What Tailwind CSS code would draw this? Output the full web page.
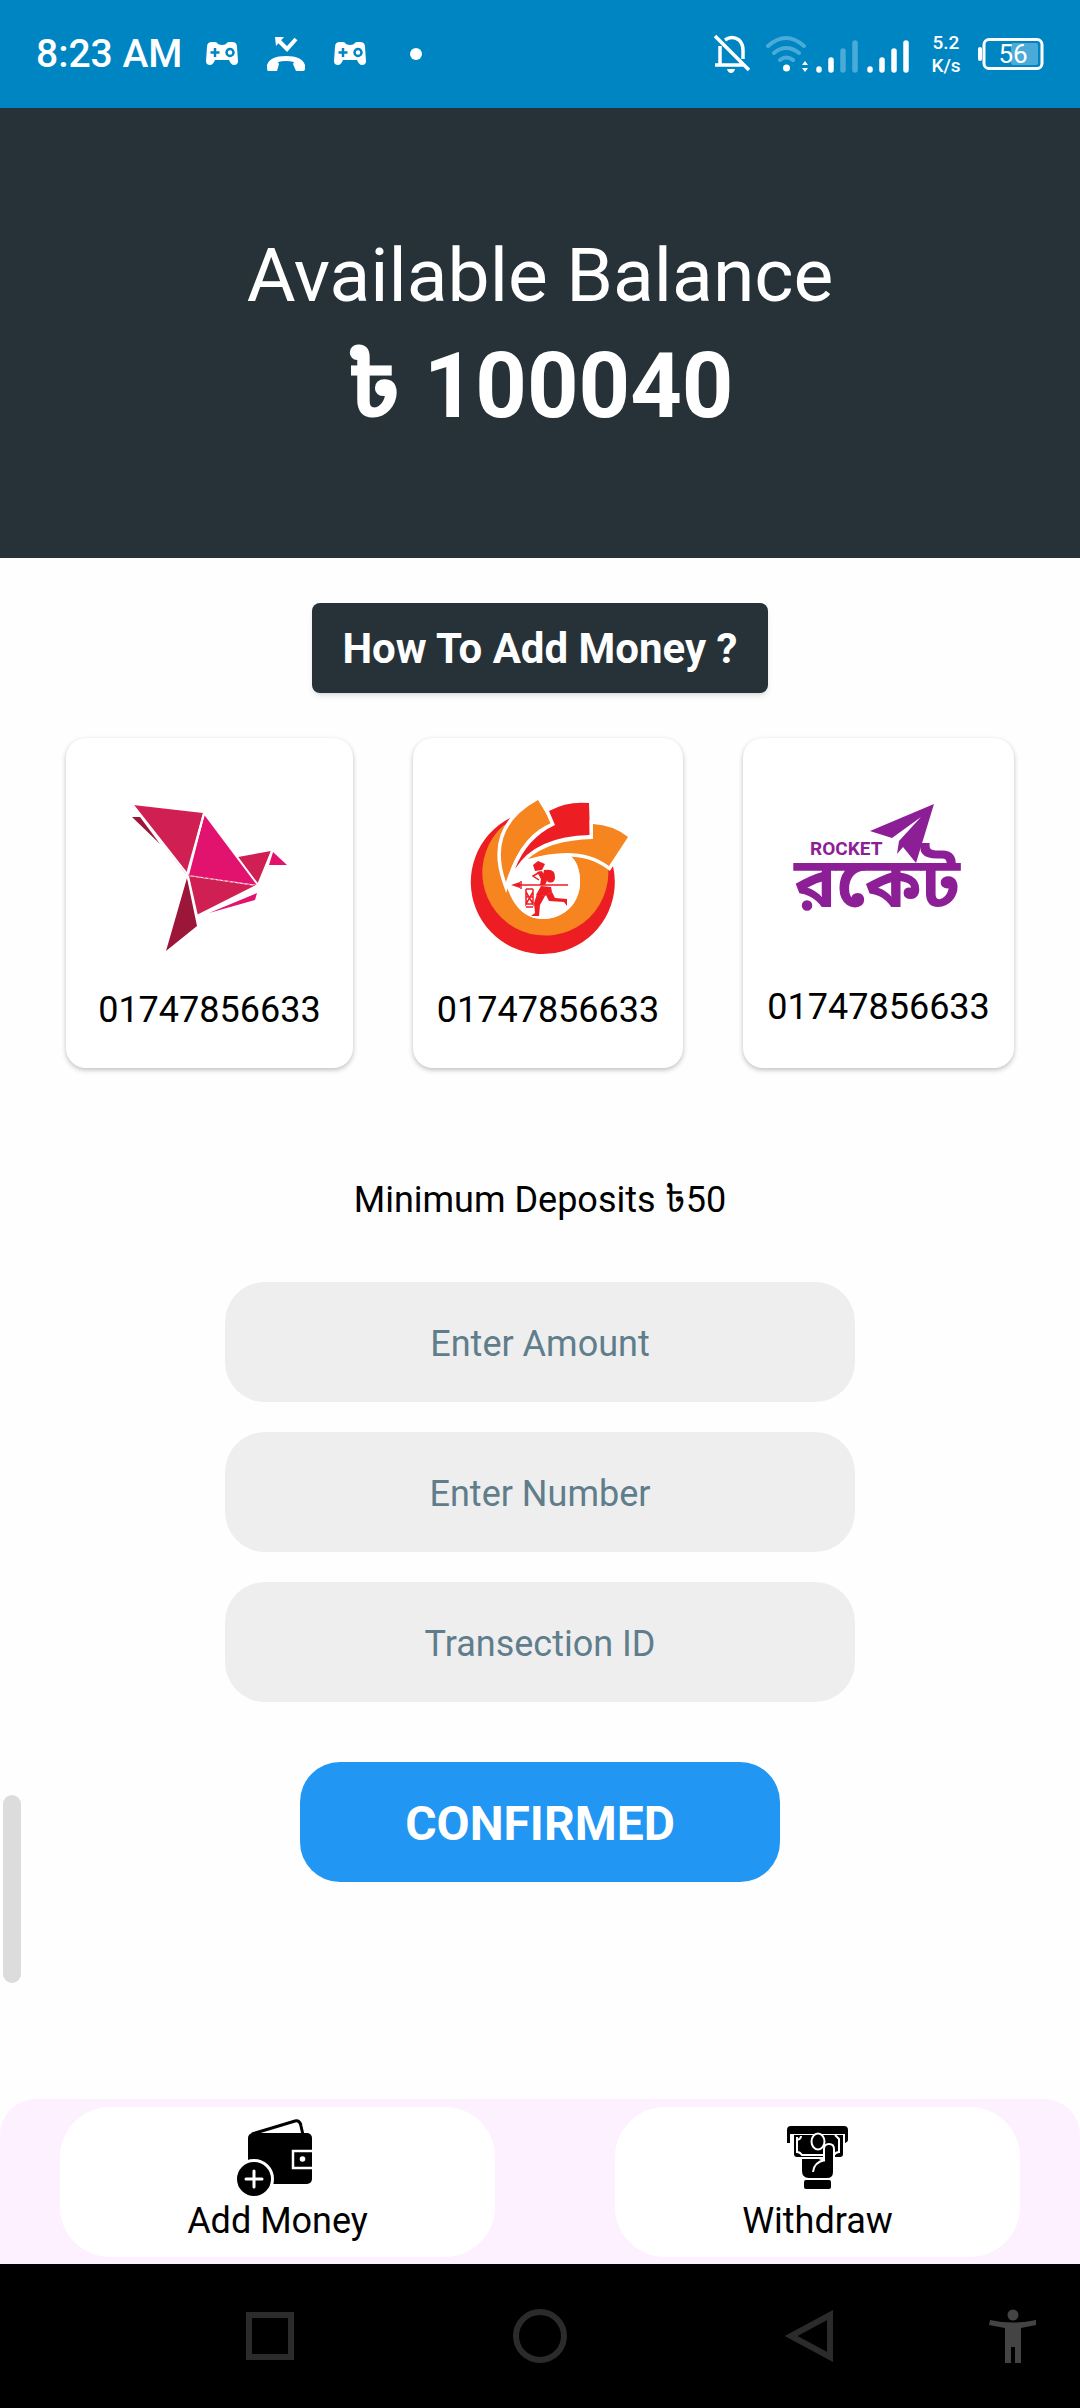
<!DOCTYPE html>
<html lang="en">
<head>
    <meta charset="UTF-8">
    <meta name="viewport" content="width=device-width, initial-scale=1.0">
    <title>Add Money</title>
    <script src="https://cdn.jsdelivr.net/npm/@tailwindcss/browser@4"></script>
    <style>
        body { font-family: Roboto, 'Noto Sans', 'Noto Sans Bengali', sans-serif; }
    </style>
</head>
<body class="bg-[#fefefe] text-black min-h-screen flex flex-col relative">
    <!-- Status bar -->
    <div class="bg-[#0085c3] h-[108px] px-9 flex items-center justify-between text-white">
        <div class="flex items-center">
            <span class="text-[39px] font-medium">8:23 AM</span>
            <svg class="w-8 h-8 ml-6" viewBox="0 0 32 32" aria-hidden="true">
                <path fill="#fff" d="M6 4h3q2 0 3 2 4 2 8 0 1-2 3-2h3q5 0 5 5l1 14q0 4-4 4-3 0-5-5H9q-2 5-5 5-4 0-4-4L1 9q0-5 5-5z"/>
                <path stroke="#0085c3" stroke-width="2.5" d="M9 10v9M4.500 14.500h9" fill="none"/>
                <circle cx="24" cy="14.500" r="3.500" fill="none" stroke="#0085c3" stroke-width="2.500"/>
            </svg>
            <svg class="w-10 h-10 ml-7" viewBox="0 0 40 40" aria-hidden="true">
                <path d="M13 7l8 8L30 5" fill="none" stroke="#fff" stroke-width="4"/>
                <path fill="#fff" d="M9 3h9l-8 9z"/>
                <path fill="#fff" d="M1 31Q4 22 20 22t19 9v4q0 2-2 2h-7l-3-7 1-2q-8-2-16 0l1 2-2 7H2q-1 0-1-6z"/>
            </svg>
            <svg class="w-8 h-8 ml-7" viewBox="0 0 32 32" aria-hidden="true">
                <path fill="#fff" d="M6 4h3q2 0 3 2 4 2 8 0 1-2 3-2h3q5 0 5 5l1 14q0 4-4 4-3 0-5-5H9q-2 5-5 5-4 0-4-4L1 9q0-5 5-5z"/>
                <path stroke="#0085c3" stroke-width="2.500" d="M9 10v9M4.500 14.500h9" fill="none"/>
                <circle cx="24" cy="14.500" r="3.500" fill="none" stroke="#0085c3" stroke-width="2.500"/>
            </svg>
            <span class="w-3 h-3 ml-11 rounded-full bg-white"></span>
        </div>
        <div class="flex items-center">
            <svg class="w-9 h-10" viewBox="0 0 36 40" fill="none" stroke="#fff" stroke-width="3.500" aria-hidden="true">
                <path d="M1 2l34 34M1 31h28M6 30V12M11 6Q18 1 25 6q4 4 4 10v9"/>
                <path d="M13 35h8q-1 4-4 4t-4-4z" fill="#fff" stroke="none"/>
            </svg>
            <svg class="w-11 h-10 ml-4" viewBox="0 0 44 40" fill="none" stroke-linecap="round" aria-hidden="true">
                <g stroke="#4aabd8" stroke-width="4"><path d="M2 12Q20-4 38 12M8 19q12-10 25 0M14 26q6-5 13 0"/></g>
                <circle cx="20.500" cy="34" r="3.500" fill="#fff"/>
                <path fill="#fff" d="M36 31l3-4 3 4zM36 34l3 4 3-4z"/>
            </svg>
            <svg class="w-11 h-10 ml-1" viewBox="0 0 44 40" stroke-width="5.500" stroke-linecap="round" aria-hidden="true">
                <path stroke="#fff" d="M5 35v1M17 26v10"/>
                <path stroke="#4aabd8" d="M29 17v19M41 9v27"/>
            </svg>
            <svg class="w-11 h-10 ml-2" viewBox="0 0 44 40" stroke="#fff" stroke-width="5.500" stroke-linecap="round" aria-hidden="true">
                <path d="M4 35v1M16 26v10M28 17v19M40 9v27"/>
            </svg>
            <div class="w-8 ml-5 flex flex-col text-center text-[19px] leading-[23px] font-medium whitespace-nowrap">
                <span>5.2</span>
                <span>K/s</span>
            </div>
            <svg class="w-[66px] h-8 ml-4" viewBox="0 0 66 32" font-family="Roboto" aria-label="Battery 56 percent">
                <rect x="0" y="9" width="4" height="14" rx="2" fill="#fff"/>
                <rect x="6" y="1.500" width="58" height="29" rx="5" fill="none" stroke="#fff" stroke-width="3"/>
                <rect x="33" y="5" width="27" height="22" rx="2" fill="#4aabd8"/>
                <text x="35" y="25" text-anchor="middle" font-size="26" fill="#fff">56</text>
            </svg>
        </div>
    </div>

    <!-- Balance -->
    <header class="bg-[#263238] h-[450px] pt-5 flex flex-col items-center justify-center text-white">
        <p class="text-[75px] leading-[88px]">Available Balance</p>
        <h1 class="text-[90px] leading-[136px] font-bold">৳ 100040</h1>
    </header>

    <main class="flex-1 flex flex-col items-center">
        <button type="button" class="mt-[45px] h-[90px] px-[30px] rounded-lg bg-[#263238] text-white text-[42px] font-bold shadow-md">How To Add Money ?</button>

        <!-- Payment methods -->
        <div class="mt-[45px] flex justify-center gap-[60px] text-4xl">
            <section class="pt-8 pb-7 px-8 flex flex-col items-center justify-center bg-white rounded-[20px] shadow-[0_2px_5px_rgba(0,0,0,0.25)]">
                <svg class="w-[210px] h-[210px]" viewBox="0 2 210 210" aria-label="bKash">
                    <path fill="#9b1638" d="M28 49h8l20 27zM83 110l10 48-31 25z"/>
                    <path fill="#d02053" d="M29 37l70 8-17 61zM84 108l68 10-59 30zM134 89l33-6-13 34z"/>
                    <path fill="#e2136e" d="M101 46l53 71-70-10zM169 84l14 13h-18zM105 145l48-20-2 7z"/>
                    <path fill="none" stroke="#fff" stroke-width="2" d="M29 37l55 70 16-62M84 108l9 40 61-31L100 45M168 83l-14 34"/>
                    <path fill="none" stroke="#e0557b" stroke-dasharray="3 2" d="M84 107l69 11"/>
                </svg>
                <span class="leading-[60px]">01747856633</span>
            </section>
            <section class="pt-8 pb-7 px-6 flex flex-col items-center justify-center bg-white rounded-[20px] shadow-[0_2px_5px_rgba(0,0,0,0.25)]">
                <svg class="w-[210px] h-[210px]" viewBox="0 2 210 210" aria-label="Nagad">
                    <!-- ring -->
                    <path fill="#ed1d24" d="M67 50A72 72 0 1 0 170 98L130 90 80 70z"/>
                    <path fill="#f6841f" d="M61 57A63 63 0 1 0 165 98L130 80 80 70z"/>
                    <path fill="#fff" d="M126 87C134 92 137 103 137 114 137 136 120 151 100 151 80 151 68 136 62 112L68 88 90 80z"/>
                    <!-- blades -->
                    <g stroke="#fff" stroke-width="7" paint-order="stroke">
                        <path fill="#f6841f" d="M95 32l14 23Q78 66 63 114 44 60 95 32z"/>
                        <path fill="#ed1d24" d="M106 43q18-10 40-8l1 32Q93 68 72 101 84 70 112 57z"/>
                        <path fill="#f6841f" d="M150 56q20 1 35 13l-19 29Q137 76 85 91 106 72 150 71z"/>
                    </g>
                    <path fill="#fff" d="M126 87C134 92 137 103 137 114 137 136 120 151 100 151 80 151 70 136 65 114L72 103 86 92Q104 85 126 87z"/>
                    <!-- runner -->
                    <path fill="#ed1d24" d="M90 97l5-4 7 3-3 6-7 1zM101 102q12-2 11 8-1 6-7 4l-5-7zM94 104l5-1 5 10-2 4h-5l1-6zM98 118l10 1 1 5-7 4-9-1zM68 117l9-3v6z"/>
                    <path fill="none" stroke="#ed1d24" stroke-width="1.500" d="M97 104l-7 4 6 4M78 113v8M76 117h49M83 121h7M83 136h7M83 139h7M83 121v15l7-12M90 121v15l-7-12M83 129h7"/>
                    <path fill="#ed1d24" d="M94 126l8 2-5 9-1 11h-8l4-3-1-10zM103 127l6-3 3 6 12 1v7l-3-4-15-1z"/>
                </svg>
                <span class="leading-[60px]">01747856633</span>
            </section>
            <section class="pt-8 pb-7 px-6 flex flex-col items-center justify-center bg-white rounded-[20px] shadow-[0_2px_5px_rgba(0,0,0,0.25)]">
                <svg class="w-[210px] h-[204px]" viewBox="0 2 210 204" fill="#8c1e96" aria-label="Rocket">
                    <path d="M96 60l64-27-18 59-13-16-6 7 2-13 22-24-29 21z"/>
                    <text x="36" y="84" font-family="Roboto" font-weight="700" font-size="19">ROCKET</text>
                    <text x="20" y="136" font-family="'Noto Sans Bengali', 'Noto Sans', sans-serif" font-weight="700" font-size="70">রকেট</text>
                </svg>
                <span class="leading-[60px]">01747856633</span>
            </section>
        </div>

        <!-- Deposit form -->
        <form class="mt-[111px] flex flex-col items-center text-4xl">
            <p class="leading-[42px]">Minimum Deposits ৳50</p>
            <div class="mt-[61px] flex flex-col gap-[30px]">
                <input type="text" aria-label="Enter Amount" placeholder="Enter Amount" class="w-[630px] h-[120px] pt-1 rounded-[40px] bg-[#eee] text-center placeholder:text-[#607d8b]">
                <input type="text" aria-label="Enter Number" placeholder="Enter Number" class="w-[630px] h-[120px] pt-1 rounded-[40px] bg-[#eee] text-center placeholder:text-[#607d8b]">
                <input type="text" aria-label="Transection ID" placeholder="Transection ID" class="w-[630px] h-[120px] pt-1 rounded-[40px] bg-[#eee] text-center placeholder:text-[#607d8b]">
            </div>
            <button type="button" class="mt-[60px] w-[480px] h-[120px] pt-1 rounded-[40px] bg-[#2196f3] text-white text-5xl font-bold">CONFIRMED</button>
        </form>
    </main>

    <!-- Edge panel handle -->
    <div class="absolute left-[3px] top-[1795px] w-[18px] h-[188px] rounded-full bg-[#dcdcdc]"></div>

    <!-- Bottom tabs -->
    <nav class="h-[165px] px-[60px] flex gap-[120px] items-center bg-[#fdf0ff] rounded-t-[36px] text-4xl">
        <a href="#add" class="flex-auto h-[150px] pb-1.5 rounded-[50px] bg-white flex flex-col items-center justify-center">
            <svg class="w-[84px] h-[84px]" viewBox="0 3 84 84" aria-hidden="true">
                <path d="M16 21L59 8q5-1 6 5l2 9" fill="none" stroke="#000" stroke-width="3"/>
                <rect x="12" y="20" width="64" height="51" rx="5"/>
                <path d="M77 38H57v17h20" fill="none" stroke="#fff" stroke-width="2.500"/>
                <circle cx="66.500" cy="46" r="2.800" fill="#fff"/>
                <circle cx="18" cy="66" r="18.500" stroke="#fff" stroke-width="3"/>
                <path d="M10 66h16M18 58v16" stroke="#fff" stroke-width="3" stroke-linecap="round"/>
            </svg>
            <span class="leading-[42px]">Add Money</span>
        </a>
        <a href="#withdraw" class="flex-auto h-[150px] pb-1.5 rounded-[50px] bg-white flex flex-col items-center justify-center">
            <svg class="w-[84px] h-[84px]" viewBox="0 3 84 84" aria-hidden="true">
                <path d="M11 30V17q0-4 4-4h53q4 0 4 4v10q0 2-3 3v-9H14v9z"/>
                <path d="M18 22h49v19q0 3-3 3H21q-3 0-3-3z"/>
                <path d="M21 24v15q3 0 5 3h32q2-3 5-3V26l-4-4M21 27q4-1 4-4" fill="none" stroke="#fff" stroke-width="2"/>
                <ellipse cx="42" cy="28.500" rx="6.500" ry="8" stroke="#fff" stroke-width="2"/>
                <path d="M48 47V36q0-5 5-5t5 5v23q0 7-7 7H33q-8 0-8-8V45h18z" stroke="#fff" stroke-width="2"/>
                <path d="M49 47q-11 2-12 12" fill="none" stroke="#fff" stroke-width="2"/>
                <rect x="28" y="67" width="27" height="9" rx="2"/>
            </svg>
            <span class="leading-[42px]">Withdraw</span>
        </a>
    </nav>

    <!-- System navigation -->
    <div class="h-36 bg-black grid grid-cols-[1fr_2fr_2fr_2fr_1fr] items-center justify-items-center">
        <button type="button" aria-label="Recent apps" class="col-start-2 w-12 h-12 border-6 border-[#2b2b2b]"></button>
        <button type="button" aria-label="Home" class="w-[54px] h-[54px] rounded-full border-6 border-[#2b2b2b]"></button>
        <button type="button" aria-label="Back">
            <svg class="w-[54px] h-[54px]" viewBox="0 0 54 54" fill="none" stroke="#2b2b2b" stroke-width="6"><path d="M47 6v42L8 27z"/></svg>
        </button>
        <button type="button" aria-label="Accessibility">
            <svg class="w-12 h-[54px]" viewBox="0 0 48 54" fill="#444"><circle cx="24" cy="6" r="5.500"/><path d="M1 11q23 5 46 0v5l-15 3v35h-6V38h-4v16h-6V19L0 16z"/></svg>
        </button>
    </div>
</body>
</html>
